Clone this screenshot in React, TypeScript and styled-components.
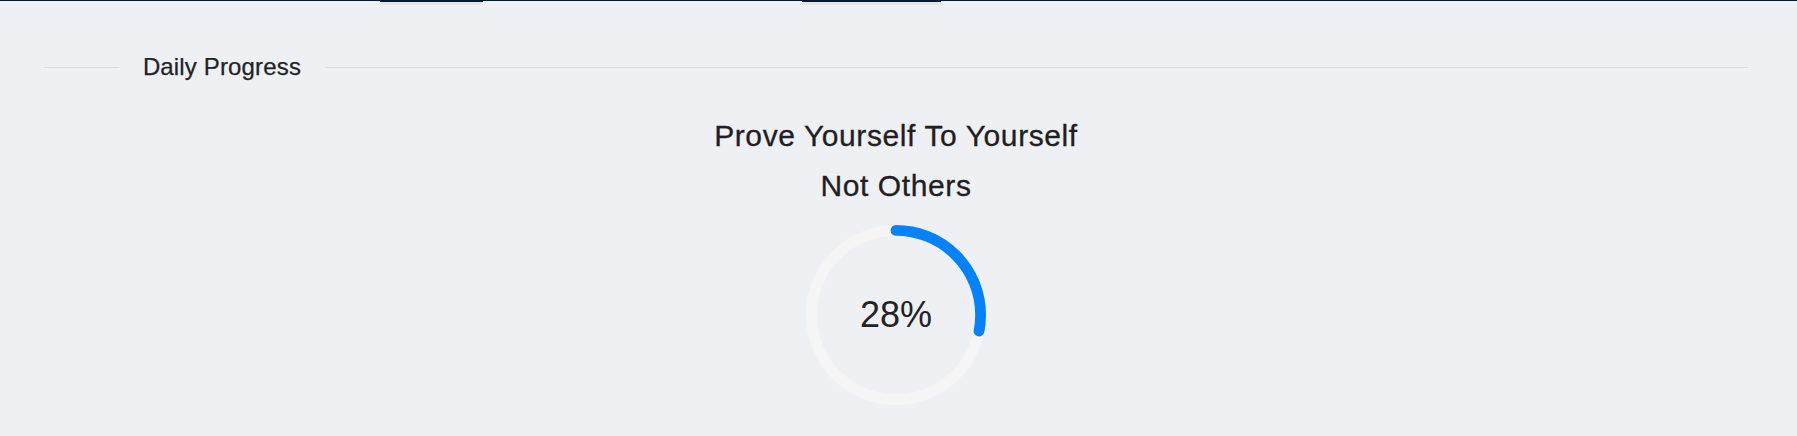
import React from "react";
import styled, { createGlobalStyle } from "styled-components";

const GlobalStyle = createGlobalStyle`
  html, body {
    margin: 0;
    padding: 0;
    background: #eff0f4;
    font-family: "Liberation Sans", Arial, sans-serif;
    color: #1f1f1f;
  }
`;

const Page = styled.div`
  min-height: 436px;
  background: #eff0f4;
`;

const TopStrip = styled.div`
  display: flex;
  height: 5px;
  border-top: 1px solid #06182b;
  box-sizing: border-box;
`;

const TabMark = styled.div<{ $offset: number; $width: number }>`
  margin-left: ${(p) => p.$offset}px;
  width: ${(p) => p.$width}px;
  height: 4px;
  border-top: 1px solid #06182b;
  background: #e2e5ea;
  box-sizing: border-box;
`;

const Content = styled.main`
  padding: 46px 49px 0 44px;
  display: flex;
  flex-direction: column;
  align-items: center;
`;

const Divider = styled.div`
  display: flex;
  align-items: center;
  width: 100%;
  &::before,
  &::after {
    content: "";
    height: 1px;
    background: #dcdde2;
  }
  &::before {
    flex: 5 1 0;
  }
  &::after {
    flex: 95 1 0;
  }
`;

const DividerLabel = styled.span`
  flex: none;
  padding: 0 24px;
  font-size: 24px;
  line-height: 32.4px;
  font-weight: 400;
  letter-spacing: 0.15px;
  color: #222326;
  white-space: nowrap;
  -webkit-text-stroke: 0.25px #222326;
`;

const Motto = styled.h2`
  margin: 28px 0 0;
  display: flex;
  flex-direction: column;
  align-items: center;
  font-size: 30px;
  font-weight: 400;
  line-height: 50px;
  letter-spacing: 0.6px;
  color: #1f2022;
  -webkit-text-stroke: 0.3px #1f2022;
`;

const RingWrap = styled.div`
  position: relative;
  width: 180px;
  height: 180px;
  margin-top: 14px;
`;

const RingSvg = styled.svg`
  display: block;
  width: 180px;
  height: 180px;
`;

const RingText = styled.span`
  position: absolute;
  inset: 0;
  display: flex;
  align-items: center;
  justify-content: center;
  font-size: 36px;
  line-height: 1;
  color: #222326;
`;

const ProgressRing: React.FC<{ percent: number }> = ({ percent }) => {
  const r = 47;
  const c = 2 * Math.PI * r;
  const len = (percent / 100) * c;
  return (
    <RingWrap>
      <RingSvg viewBox="0 0 100 100">
        <circle cx="50" cy="50" r={r} fill="none" stroke="#f5f5f5" strokeWidth="6" />
        <circle
          cx="50"
          cy="50"
          r={r}
          fill="none"
          stroke="#0482fa"
          strokeWidth="6"
          strokeLinecap="round"
          strokeDasharray={`${len} ${c}`}
          transform="rotate(-90 50 50)"
        />
      </RingSvg>
      <RingText>{percent}%</RingText>
    </RingWrap>
  );
};

export default function App() {
  return (
    <Page>
      <GlobalStyle />
      <TopStrip>
        <TabMark $offset={380} $width={103} />
        <TabMark $offset={319} $width={139} />
      </TopStrip>
      <Content>
        <Divider>
          <DividerLabel>Daily Progress</DividerLabel>
        </Divider>
        <Motto>
          <span>Prove Yourself To Yourself</span>
          <span>Not Others</span>
        </Motto>
        <ProgressRing percent={28} />
      </Content>
    </Page>
  );
}
